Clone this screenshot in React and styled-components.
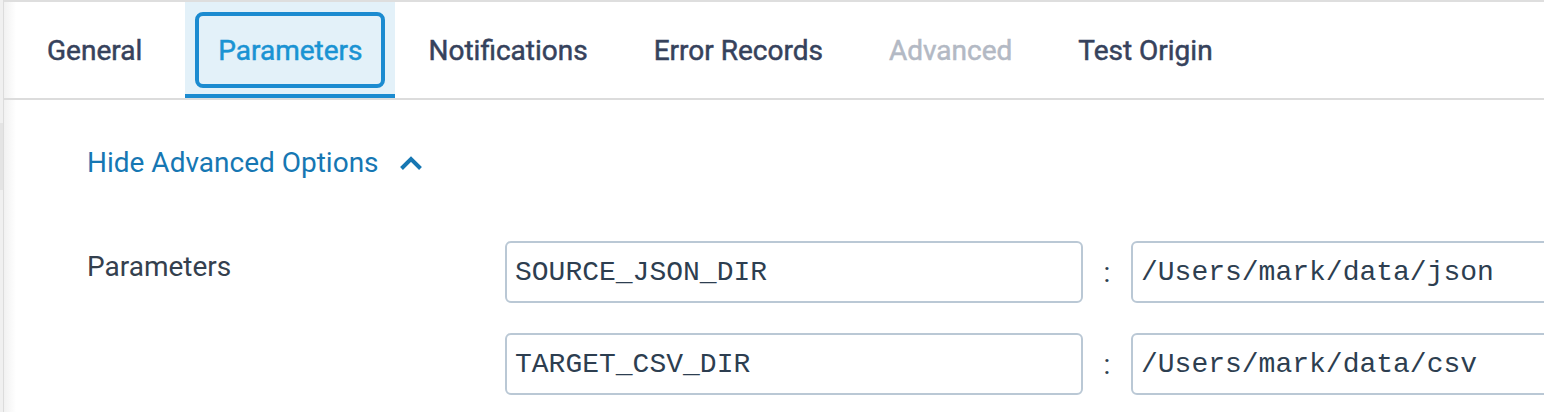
import React from "react";
import styled, { createGlobalStyle } from "styled-components";

const GlobalStyle = createGlobalStyle`
  html, body {
    margin: 0;
    padding: 0;
    background: #ffffff;
    font-family: Roboto, "Liberation Sans", sans-serif;
    overflow: hidden;
  }
`;

const tabs = [
  { label: "General" },
  { label: "Parameters", active: true },
  { label: "Notifications" },
  { label: "Error Records" },
  { label: "Advanced", disabled: true },
  { label: "Test Origin" },
];

const params = [
  { name: "SOURCE_JSON_DIR", value: "/Users/mark/data/json" },
  { name: "TARGET_CSV_DIR", value: "/Users/mark/data/csv" },
];

function App() {
  return (
    <Page>
      <GlobalStyle />
      <Rail>
        <RailThumb />
      </Rail>
      <Main>
        <TabBar>
          {tabs.map((t) => (
            <Tab key={t.label} $active={t.active}>
              <TabLabel $active={t.active} $disabled={t.disabled}>
                {t.label}
              </TabLabel>
            </Tab>
          ))}
        </TabBar>
        <Content>
          <ToggleLink>
            Hide Advanced Options
            <svg width="24" height="16" viewBox="0 0 24 16">
              <path
                d="M2.5 13.5 L12 4 L21.5 13.5"
                fill="none"
                stroke="#1677b3"
                strokeWidth="4"
              />
            </svg>
          </ToggleLink>
          <FieldRow>
            <FieldLabel>Parameters</FieldLabel>
            <ParamList>
              {params.map((p) => (
                <ParamRow key={p.name}>
                  <TextBox>{p.name}</TextBox>
                  <Colon>:</Colon>
                  <TextBox>{p.value}</TextBox>
                </ParamRow>
              ))}
            </ParamList>
          </FieldRow>
        </Content>
      </Main>
    </Page>
  );
}

const Page = styled.div`
  display: flex;
  height: 100vh;
  width: 100vw;
  overflow: hidden;
`;

const Rail = styled.div`
  width: 3px;
  flex-shrink: 0;
  background: #f0f0f0;
  border-right: 1px solid #dcdcdc;
  padding-top: 123px;
`;

const RailThumb = styled.div`
  height: 67px;
  background: #e4e4e4;
`;

const Main = styled.div`
  flex: 1;
  min-width: 0;
  border-top: 2px solid #dedede;
  background: linear-gradient(to right, #f1f1f1 0px, #ffffff 12px);
`;

const TabBar = styled.div`
  display: flex;
  height: 96px;
  padding-left: 10px;
  border-bottom: 2px solid #dcdcdc;
`;

const Tab = styled.div`
  display: flex;
  box-sizing: border-box;
  height: 96px;
  padding: 10px 10px 6px;
  margin-left: ${(p) => (p.$active ? "10px" : "0")};
  background: ${(p) => (p.$active ? "#e3f1f9" : "transparent")};
  border-bottom: 4px solid ${(p) => (p.$active ? "#1b8bd0" : "transparent")};
`;

const TabLabel = styled.div`
  display: flex;
  align-items: center;
  padding: 0 19px;
  border: 4px solid ${(p) => (p.$active ? "#1b8bd0" : "transparent")};
  border-radius: 8px;
  font-size: 28px;
  font-weight: 400;
  -webkit-text-stroke: 0.5px currentColor;
  white-space: nowrap;
  color: ${(p) =>
    p.$active ? "#1a93d3" : p.$disabled ? "#b3b9c4" : "#36425c"};
`;

const Content = styled.div`
  padding: 42px 0 0 83px;
`;

const ToggleLink = styled.div`
  display: flex;
  align-items: center;
  gap: 20px;
  height: 40px;
  font-size: 28px;
  color: #1677b3;

  svg {
    margin-top: 2px;
  }
`;

const FieldRow = styled.div`
  display: flex;
  margin-top: 59px;
`;

const FieldLabel = styled.div`
  width: 418px;
  flex-shrink: 0;
  padding-top: 6px;
  line-height: 40px;
  font-size: 28px;
  color: #34404e;
`;

const ParamList = styled.div`
  display: flex;
  flex-direction: column;
  gap: 30px;
`;

const ParamRow = styled.div`
  display: flex;
  align-items: center;
`;

const TextBox = styled.div`
  box-sizing: border-box;
  width: 578px;
  height: 62px;
  flex-shrink: 0;
  display: flex;
  align-items: center;
  padding: 0 8px;
  border: 2px solid #bac8d5;
  border-radius: 6px;
  background: #ffffff;
  font-family: "Liberation Mono", "Courier New", monospace;
  font-size: 28px;
  color: #2d3e50;
  white-space: nowrap;
`;

const Colon = styled.div`
  width: 48px;
  text-align: center;
  font-size: 28px;
  color: #2d3e50;
`;

export default App;
